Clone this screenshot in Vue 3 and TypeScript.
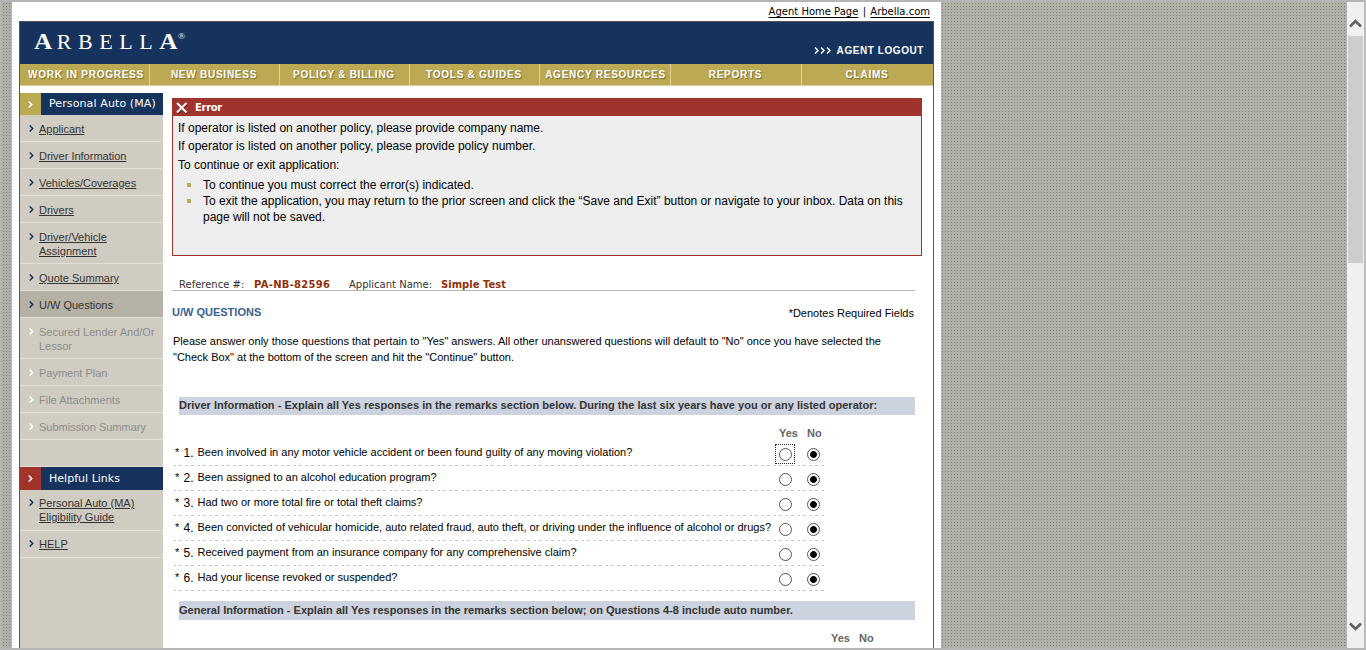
<script setup lang="ts">
interface MenuItem { lines: string[]; state: 'link' | 'current' | 'off' }

const nav: string[] = [
  'WORK IN PROGRESS', 'NEW BUSINESS', 'POLICY & BILLING', 'TOOLS & GUIDES',
  'AGENCY RESOURCES', 'REPORTS', 'CLAIMS',
]
const menu: MenuItem[] = [
  { lines: ['Applicant'], state: 'link' },
  { lines: ['Driver Information'], state: 'link' },
  { lines: ['Vehicles/Coverages'], state: 'link' },
  { lines: ['Drivers'], state: 'link' },
  { lines: ['Driver/Vehicle', 'Assignment'], state: 'link' },
  { lines: ['Quote Summary'], state: 'link' },
  { lines: ['U/W Questions'], state: 'current' },
  { lines: ['Secured Lender And/Or', 'Lessor'], state: 'off' },
  { lines: ['Payment Plan'], state: 'off' },
  { lines: ['File Attachments'], state: 'off' },
  { lines: ['Submission Summary'], state: 'off' },
]
const helpful: MenuItem[] = [
  { lines: ['Personal Auto (MA)', 'Eligibility Guide'], state: 'link' },
  { lines: ['HELP'], state: 'link' },
]
const questions: string[] = [
  'Been involved in any motor vehicle accident or been found guilty of any moving violation?',
  'Been assigned to an alcohol education program?',
  'Had two or more total fire or total theft claims?',
  'Been convicted of vehicular homicide, auto related fraud, auto theft, or driving under the influence of alcohol or drugs?',
  'Received payment from an insurance company for any comprehensive claim?',
  'Had your license revoked or suspended?',
]
</script>

<template>
  <div class="window">
    <div class="page">
      <div class="toplinks"><a>Agent Home Page</a><i>|</i><a>Arbella.com</a></div>
      <div class="shell">
        <header class="banner">
          <div class="logo"><b>A</b><span>RBELL</span><b>A</b><sup>®</sup></div>
          <div class="logout">
            <svg width="18" height="7" viewBox="0 0 18 7"><path d="M1 .5l3 3-3 3M7 .5l3 3-3 3M13 .5l3 3-3 3" fill="none" stroke="#fff" stroke-width="1.4" /></svg>
            <span>AGENT LOGOUT</span>
          </div>
        </header>
        <nav class="nav"><div v-for="n in nav" :key="n"><span>{{ n }}</span></div></nav>
        <div class="body">
          <aside class="side">
            <div class="head">
              <div class="tab"><svg width="5" height="7" viewBox="0 0 5 7"><path d="M.7 .5l3 3-3 3" /></svg></div>
              <span>Personal Auto (MA)</span>
            </div>
            <div v-for="m in menu" :key="m.lines[0]" class="item" :class="m.state">
              <svg width="5" height="7" viewBox="0 0 5 7"><path d="M.7 .5l3 3-3 3" /></svg>
              <div><div v-for="l in m.lines" :key="l"><span>{{ l }}</span></div></div>
            </div>
            <div class="gap"></div>
            <div class="head red">
              <div class="tab"><svg width="5" height="7" viewBox="0 0 5 7"><path d="M.7 .5l3 3-3 3" /></svg></div>
              <span>Helpful Links</span>
            </div>
            <div v-for="m in helpful" :key="m.lines[0]" class="item help" :class="m.state">
              <svg width="5" height="7" viewBox="0 0 5 7"><path d="M.7 .5l3 3-3 3" /></svg>
              <div><div v-for="l in m.lines" :key="l"><span>{{ l }}</span></div></div>
            </div>
          </aside>
          <main class="main">
            <section class="error">
              <div class="errhead">
                <svg width="12" height="12" viewBox="0 0 12 12"><path d="M2 2.4l9 9M11 2.4l-9 9" stroke="#6f1d18" stroke-width="2" /><path d="M1 1l9.5 9.5M10.5 1L1 10.500" stroke="#fff" stroke-width="2" /></svg>
                <span>Error</span>
              </div>
              <p class="e1">If operator is listed on another policy, please provide company name.</p>
              <p>If operator is listed on another policy, please provide policy number.</p>
              <p class="e3">To continue or exit application:</p>
              <ul>
                <li>To continue you must correct the error(s) indicated.</li>
                <li>To exit the application, you may return to the prior screen and click the “Save and Exit” button or navigate to your inbox. Data on this<br>page will not be saved.</li>
              </ul>
            </section>
            <div class="ref">
              <span class="r1">Reference #:</span><b class="r2">PA-NB-82596</b><span class="r3">Applicant Name:</span><b>Simple Test</b>
            </div>
            <div class="title"><h1>U/W QUESTIONS</h1><span>*Denotes Required Fields</span></div>
            <p class="intro"><span class="wide">Please answer only those questions that pertain to "Yes" answers. All other unanswered questions will default to "No" once you have selected the</span><br><span>"Check Box" at the bottom of the screen and hit the "Continue" button.</span></p>
            <h2 class="bar"><span>Driver Information - Explain all Yes responses in the remarks section below. During the last six years have you or any listed operator:</span></h2>
            <div class="yn"><span>Yes</span><span>No</span></div>
            <div v-for="(q, i) in questions" :key="q" class="q">
              <i>*</i><em>{{ i + 1 }}.</em><span>{{ q }}</span>
              <div class="radio" :class="{ focus: i === 0 }"><div class="circle"></div></div>
              <div class="radio"><div class="circle on"></div></div>
            </div>
            <h2 class="bar second"><span>General Information - Explain all Yes responses in the remarks section below; on Questions 4-8 include auto number.</span></h2>
            <div class="yn yn2"><span>Yes</span><span>No</span></div>
          </main>
        </div>
      </div>
    </div>
    <div class="scroll">
      <svg width="17" height="34" viewBox="0 0 17 34"><path d="M3 24.500l5.500-5.500 5.500 5.500" fill="none" stroke="#606060" stroke-width="2.600" /></svg>
      <div class="thumb"></div>
      <svg class="down" width="17" height="34" viewBox="0 0 17 34"><path d="M3 9.500l5.500 5.500 5.500-5.500" fill="none" stroke="#606060" stroke-width="2.600" /></svg>
    </div>
  </div>
</template>

<style>
html, body { margin: 0; height: 650px; overflow: hidden; }
</style>

<style scoped>
* { box-sizing: border-box; }
.window {
  width: 1366px; height: 650px; overflow: hidden; display: flex; justify-content: space-between;
  border: 2px solid #b5b5b5; border-right-color: #bcbcbc; padding-left: 10px;
  font-family: "Liberation Sans", Arial, sans-serif; font-size: 11px; color: #000;
  background: conic-gradient(from 0deg at 1px 1px, #b1b1a7 75%, #80807a 0) 1px 1px / 3px 3px #b1b1a7;
}
.window span, .window b, .window a { white-space: nowrap; }
.page { width: 929px; height: 646px; background: #fff; padding: 0 7px; overflow: hidden; }
.toplinks { height: 19px; display: flex; justify-content: flex-end; padding: 3px 4px 0 0; font: 10px/14px "DejaVu Sans", sans-serif; }
.toplinks a { text-decoration: underline; text-underline-offset: 2px; }
.toplinks i { font-style: normal; width: 12px; text-align: center; }
.shell { border: 1px solid #555; border-bottom: 0; height: 700px; }
.banner { height: 42px; background: #16335d; color: #fff; display: flex; justify-content: space-between; }
.logo { display: flex; font: 20px/24px "Liberation Serif", serif; margin: 8px 0 0 14px; letter-spacing: 6px; transform: scaleX(1.1); transform-origin: 0 0; }
.logo b { font-weight: 700; font-size: 23px; line-height: 23px; letter-spacing: 4px; }
.logo b:last-of-type { letter-spacing: 0; }
.logo sup { font-size: 9px; line-height: 13px; letter-spacing: 0; }
.logout { display: flex; align-items: center; gap: 5px; height: 14px; margin: 21px 9px 0 0; font-weight: 700; font-size: 10px; letter-spacing: 0.570px; }
.nav { height: 22px; display: grid; grid-template-columns: 130px 130px 130px 130px 131px 131px 131px; background: #bba954; border-bottom: 1px solid #e0cd9c; }
.nav div { text-align: center; border-right: 1px solid #e2d095; font-size: 10px; font-weight: 700; line-height: 20px; color: #fff; letter-spacing: 0.750px; text-shadow: 1px 1px 1px #7c6d2c; padding-right: 1px; padding-top: 0.600px; white-space: nowrap; }
.nav div:first-child { padding-left: 4px; }
.nav div:nth-child(5) { padding-left: 2px; }
.nav div:last-child { border-right: 0; }
.body { display: flex; height: 600px; }
.side { width: 143px; margin-top: 7px; background: #d0ccc1; }
.head { height: 22px; background: #16335d; color: #fff; display: flex; font: 11px/22px "DejaVu Sans", sans-serif; letter-spacing: 0.110px; }
.head.red { height: 23px; line-height: 23px; letter-spacing: 0.020px; }
.tab { width: 21px; margin-right: 8px; background: #bba954; display: flex; align-items: center; justify-content: center; }
.red .tab { background: #a0332c; }
svg path { fill: none; }
.head svg path { stroke: #fff; stroke-width: 1.500; }
.item { display: flex; min-height: 27px; padding: 7px 0 5px 9px; line-height: 14px; border-bottom: 1px solid #e3e0d8; color: #333; }
.item.help { padding: 6px 0 6px 9px; }
.item svg { margin: 3px 5px 0 0; flex: none; }
.item path { stroke: #16335d; stroke-width: 1.500; }
.link span { text-decoration: underline; text-underline-offset: 1px; }
.current { background: #b6b1a5; }
.item.off { color: #8c8c8c; }
.off path { stroke: #fff; }
.gap { height: 27px; border-bottom: 1px solid #e3e0d8; }
.main { margin-left: 9px; width: 750px; padding-top: 12px; }
.error { height: 158px; border: 1px solid #a0332c; background: #eee; font-size: 12px; }
.errhead { height: 17px; background: #a0332c; color: #fff; display: flex; align-items: center; padding-left: 3px; gap: 7px; font: bold 10px/17px "DejaVu Sans", sans-serif; letter-spacing: -0.300px; }
p { margin: 0; }
.error p { line-height: 18px; padding-left: 5px; }
.error .e1 { padding-top: 3px; }
.error .e3 { padding-top: 1px; }
ul { list-style: none; margin: 3px 0 0; padding: 0 0 0 30px; line-height: 16px; }
li { position: relative; white-space: nowrap; }
li::before { content: ""; position: absolute; left: -16px; top: 6px; width: 4px; height: 4px; background: #bba954; }
.ref { width: 743px; height: 35px; padding: 22px 0 0 7px; border-bottom: 1px solid #b5b5b5; display: flex; font: 10px/13px "DejaVu Sans", sans-serif; color: #333; }
.ref b { color: #933009; }
.ref .r2 { letter-spacing: 0.280px; }
.r1 { width: 75px; } .r2 { width: 95px; } .r3 { width: 92px; }
.title { width: 742px; height: 42px; display: flex; justify-content: space-between; padding-top: 14px; line-height: 16px; }
.title h1 { margin: 0; font-size: 11px; line-height: 14px; color: #3b5f92; }
.intro { padding-left: 1px; line-height: 16px; white-space: nowrap; height: 64px; }
.wide { letter-spacing: 0.012px; }
.bar { margin: 0 0 0 7px; width: 736px; height: 18px; background: #cdd3de; font-size: 11px; line-height: 17px; color: #333; letter-spacing: 0.014px; }
.yn { display: flex; gap: 9px; padding: 10px 0 0 607px; height: 26px; font-weight: 700; line-height: 16px; color: #666; }
.q { margin-left: 2px; width: 650px; height: 25px; display: grid; grid-template-columns: 8.500px 14px 576.500px 28px 23px; padding-left: 1px; line-height: 23px; background: repeating-linear-gradient(270deg, #c6c6c6 0 3px, transparent 3px 6px) 0 100% / 100% 1px no-repeat; }
.q i, .q em { font-style: normal; }
.q em { font-size: 12px; line-height: 24px; }
.radio { height: 20px; width: 20px; margin: 3px 0 0 1px; display: flex; align-items: center; justify-content: center; }
.focus { outline: 1px dotted #222; outline-offset: -1px; }
.circle { width: 13px; height: 13px; border: 1px solid #555; border-radius: 50%; background: #fff; }
.on { background: radial-gradient(circle, #000 3px, #fff 3.800px); }
.bar.second { margin-top: 10px; height: 19px; line-height: 18px; }
.yn2 { padding-left: 659px; }
.scroll { width: 17px; height: 646px; background: #f0f0f0; display: flex; flex-direction: column; }
.thumb { width: 15px; height: 227px; background: #cdcdcd; margin-left: 1px; }
.down { margin-top: auto; }
</style>
